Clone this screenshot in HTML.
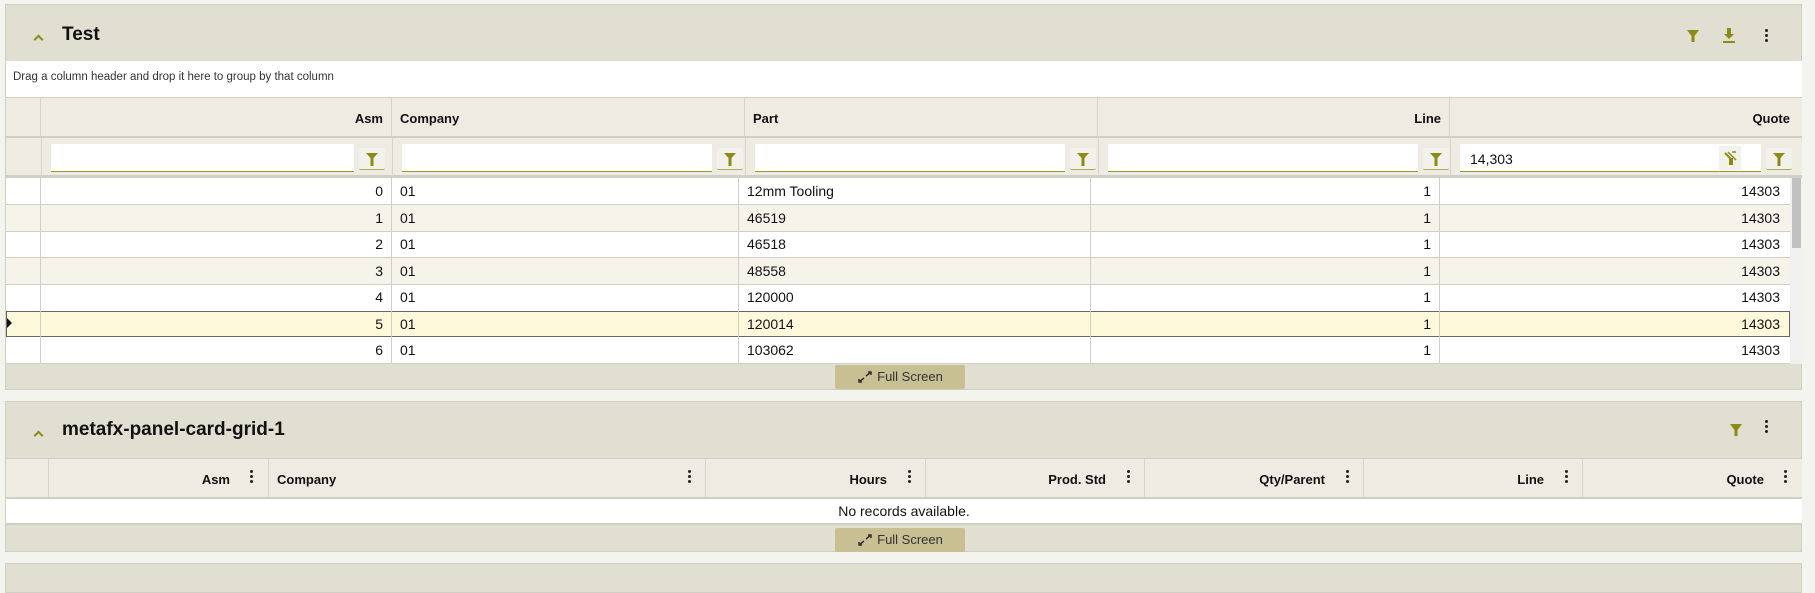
<!DOCTYPE html>
<html><head><meta charset="utf-8"><style>
*{box-sizing:border-box;margin:0;padding:0}
body{width:1815px;height:576px;background:#f4f4ef;font-family:"Liberation Sans",sans-serif;color:#111;position:relative;overflow:hidden}
.a{position:absolute}
.panel{position:absolute;left:5px;width:1797px;border:1px solid #d0cfc4;background:#e1dfd1}
.hdr{position:absolute;left:0;right:0;top:0;background:#e1dfd1}
.title{position:absolute;left:56px;font-size:19px;font-weight:bold}
.chev{position:absolute;left:29px;width:7px;height:7px;border-left:2px solid #8c8c10;border-top:2px solid #8c8c10;transform:rotate(45deg)}
.cell{position:absolute;font-size:14px;line-height:26.5px;white-space:nowrap;overflow:hidden}
.hcell{position:absolute;font-size:13px;font-weight:bold;border-right:1px solid #d6d4cc;background:#eeebe3}
.fbtn{position:absolute;width:26px;height:22px;background:#f2f1ec;border-bottom:1px solid #b0ad50;border-radius:2px}
.inp{position:absolute;height:28px;background:#fff;border-bottom:1px solid #9a9a20}
.fs{position:absolute;width:130px;height:24px;background:#c8bf93;border-radius:2px;font-size:13px;color:#333;line-height:24px;text-align:center;padding-left:20px}
.dots{position:absolute;width:3px}
.dots i{display:block;width:3px;height:3px;background:#222;border-radius:50%;margin-bottom:2px}
</style></head><body>

<!-- PANEL 1 -->
<div class="panel" style="top:4px;height:386px">
  <div class="hdr" style="height:56px"></div>
  <div class="chev" style="top:31px"></div>
  <div class="title" style="top:19px">Test</div>
  <svg class="a" style="left:1680px;top:24px" width="14" height="14" viewBox="0 0 14 14"><path d="M1 1h12L8.5 7v6h-3V7z" fill="#8c8c10"/></svg>
  <svg class="a" style="left:1716px;top:22px" width="14" height="16" viewBox="0 0 14 16"><path d="M5 1h4v6h3L7 12 2 7h3z" fill="#8c8c10"/><rect x="1" y="14" width="12" height="2" fill="#8c8c10"/></svg>
  <div class="dots" style="left:1759px;top:24px"><i></i><i></i><i></i></div>
  <div class="a" style="left:0;top:56px;width:1796px;height:36px;background:#fff;font-size:11.5px;color:#333;padding:10px 0 0 7px">Drag a column header and drop it here to group by that column</div>
  <div class="a" style="left:0;top:92px;width:1796px;height:41px;background:#eeebe3;border-top:1px solid #d0cfc4;border-bottom:2px solid #d0cfc4"></div>
  <div class="hcell" style="left:0;top:93px;width:35px;height:38px"></div>
  <div class="hcell" style="left:35px;top:93px;width:351px;height:38px;text-align:right;padding:13px 8px 0 0">Asm</div>
  <div class="hcell" style="left:386px;top:93px;width:353px;height:38px;padding:13px 0 0 8px">Company</div>
  <div class="hcell" style="left:739px;top:93px;width:353px;height:38px;padding:13px 0 0 8px">Part</div>
  <div class="hcell" style="left:1092px;top:93px;width:352px;height:38px;text-align:right;padding:13px 8px 0 0">Line</div>
  <div class="hcell" style="left:1444px;top:93px;width:352px;height:38px;text-align:right;padding:13px 12px 0 0;border-right:none">Quote</div>
  <div class="a" style="left:0;top:133px;width:1796px;height:40px;background:#eeebe3;border-bottom:3px solid #d0cfc4"></div>
  <div class="a" style="left:35px;top:133px;width:1px;height:40px;background:#d6d4cc"></div>
  <div class="a" style="left:386px;top:133px;width:1px;height:40px;background:#d6d4cc"></div>
  <div class="a" style="left:739px;top:133px;width:1px;height:40px;background:#d6d4cc"></div>
  <div class="a" style="left:1092px;top:133px;width:1px;height:40px;background:#d6d4cc"></div>
  <div class="a" style="left:1444px;top:133px;width:1px;height:40px;background:#d6d4cc"></div>
  <div class="inp" style="left:45px;top:139px;width:303px"></div>
  <div class="inp" style="left:396px;top:139px;width:310px"></div>
  <div class="inp" style="left:749px;top:139px;width:310px"></div>
  <div class="inp" style="left:1102px;top:139px;width:310px"></div>
  <div class="inp" style="left:1454px;top:139px;width:301px;font-size:14px;padding:7px 0 0 10px">14,303</div>
  <div class="fbtn" style="left:353px;top:143px"></div>
  <div class="fbtn" style="left:711px;top:143px"></div>
  <div class="fbtn" style="left:1064px;top:143px"></div>
  <div class="fbtn" style="left:1417px;top:143px"></div>
  <div class="fbtn" style="left:1760px;top:143px"></div>
  <div class="a" style="left:1713px;top:141px;width:22px;height:24px;background:#f2f1ec"></div>
  <svg class="a" style="left:360px;top:148px" width="12" height="13"><path d="M0 0h12L7.5 5v8h-3V5z" fill="#8c8c10"/></svg>
  <svg class="a" style="left:718px;top:148px" width="12" height="13"><path d="M0 0h12L7.5 5v8h-3V5z" fill="#8c8c10"/></svg>
  <svg class="a" style="left:1071px;top:148px" width="12" height="13"><path d="M0 0h12L7.5 5v8h-3V5z" fill="#8c8c10"/></svg>
  <svg class="a" style="left:1424px;top:148px" width="12" height="13"><path d="M0 0h12L7.5 5v8h-3V5z" fill="#8c8c10"/></svg>
  <svg class="a" style="left:1767px;top:148px" width="12" height="13"><path d="M0 0h12L7.5 5v8h-3V5z" fill="#8c8c10"/></svg>
  <svg class="a" style="left:1718px;top:146px" width="13" height="14"><path d="M1 2l5 5v6h2V7" stroke="#8c8c10" stroke-width="2" fill="none"/><path d="M4 1l8 8M8 1h4" stroke="#8c8c10" stroke-width="1.5"/></svg>
  <div class="a" style="left:0;top:173px;width:1796px;height:186px;background:#fff;overflow:hidden">
    <div class="a" style="left:0;top:26.5px;width:1784px;height:26px;background:#f6f3eb"></div>
    <div class="a" style="left:0;top:79.5px;width:1784px;height:26px;background:#f6f3eb"></div>
    <div class="a" style="left:0;top:132.5px;width:1784px;height:26px;background:#fff9dc;border:1px solid #666"></div>
    <div class="a" style="left:0;top:26px;width:1784px;height:1px;background:#d0cfc4"></div>
    <div class="a" style="left:0;top:52.5px;width:1784px;height:1px;background:#d0cfc4"></div>
    <div class="a" style="left:0;top:79px;width:1784px;height:1px;background:#d0cfc4"></div>
    <div class="a" style="left:0;top:105.5px;width:1784px;height:1px;background:#d0cfc4"></div>
    <div class="a" style="left:0;top:185px;width:1784px;height:1px;background:#d0cfc4"></div>
    <div class="a" style="left:34px;top:0;width:1px;height:186px;background:#d0cfc4"></div>
    <div class="a" style="left:385px;top:0;width:1px;height:186px;background:#d0cfc4"></div>
    <div class="a" style="left:732px;top:0;width:1px;height:186px;background:#d0cfc4"></div>
    <div class="a" style="left:1084px;top:0;width:1px;height:186px;background:#d0cfc4"></div>
    <div class="a" style="left:1433px;top:0;width:1px;height:186px;background:#d0cfc4"></div>
    <div class="a" style="left:1784px;top:0;width:12px;height:186px;background:#f0f0f0"></div>
    <div class="a" style="left:1786px;top:0;width:9px;height:70px;background:#c1c1c1"></div>
    <svg class="a" style="left:1px;top:140px" width="6" height="10"><path d="M0 0l5 5-5 5z" fill="#111"/></svg>
    <div class="cell" style="left:35px;top:0;width:342px;text-align:right">0<br>1<br>2<br>3<br>4<br>5<br>6</div>
    <div class="cell" style="left:394px;top:0">01<br>01<br>01<br>01<br>01<br>01<br>01</div>
    <div class="cell" style="left:741px;top:0">12mm Tooling<br>46519<br>46518<br>48558<br>120000<br>120014<br>103062</div>
    <div class="cell" style="left:1085px;top:0;width:340px;text-align:right">1<br>1<br>1<br>1<br>1<br>1<br>1</div>
    <div class="cell" style="left:1434px;top:0;width:340px;text-align:right">14303<br>14303<br>14303<br>14303<br>14303<br>14303<br>14303</div>
  </div>
  <div class="fs" style="left:829px;top:360px">Full Screen</div>
  <svg class="a" style="left:852px;top:366px" width="14" height="12"><path d="M8 5l5-4M10 1h3v3M6 7l-5 4M1 8v3h3" stroke="#333" stroke-width="1.5" fill="none"/></svg>
</div>

<!-- PANEL 2 -->
<div class="panel" style="top:401px;height:151px">
  <div class="chev" style="top:30px"></div>
  <div class="title" style="top:17px">metafx-panel-card-grid-1</div>
  <svg class="a" style="left:1723px;top:21px" width="14" height="14" viewBox="0 0 14 14"><path d="M1 1h12L8.5 7v6h-3V7z" fill="#8c8c10"/></svg>
  <div class="dots" style="left:1759px;top:18px"><i></i><i></i><i></i></div>
  <div class="a" style="left:0;top:56px;width:1796px;height:41px;background:#eeebe3;border-top:1px solid #d0cfc4;border-bottom:2px solid #d0cfc4"></div>
  <div class="hcell" style="left:0;top:57px;width:43px;height:38px"></div>
  <div class="hcell" style="left:43px;top:57px;width:220px;height:38px;text-align:right;padding:13px 38px 0 0">Asm</div>
  <div class="hcell" style="left:263px;top:57px;width:437px;height:38px;padding:13px 0 0 8px">Company</div>
  <div class="hcell" style="left:700px;top:57px;width:220px;height:38px;text-align:right;padding:13px 38px 0 0">Hours</div>
  <div class="hcell" style="left:920px;top:57px;width:219px;height:38px;text-align:right;padding:13px 38px 0 0">Prod. Std</div>
  <div class="hcell" style="left:1139px;top:57px;width:219px;height:38px;text-align:right;padding:13px 38px 0 0">Qty/Parent</div>
  <div class="hcell" style="left:1358px;top:57px;width:219px;height:38px;text-align:right;padding:13px 38px 0 0">Line</div>
  <div class="hcell" style="left:1577px;top:57px;width:219px;height:38px;text-align:right;padding:13px 38px 0 0;border-right:none">Quote</div>
  <div class="dots" style="left:244px;top:68px"><i></i><i></i><i></i></div>
  <div class="dots" style="left:682px;top:68px"><i></i><i></i><i></i></div>
  <div class="dots" style="left:902px;top:68px"><i></i><i></i><i></i></div>
  <div class="dots" style="left:1121px;top:68px"><i></i><i></i><i></i></div>
  <div class="dots" style="left:1340px;top:68px"><i></i><i></i><i></i></div>
  <div class="dots" style="left:1559px;top:68px"><i></i><i></i><i></i></div>
  <div class="dots" style="left:1778px;top:68px"><i></i><i></i><i></i></div>
  <div class="a" style="left:0;top:97px;width:1796px;height:26px;background:#fff;border-bottom:2px solid #d0cfc4;text-align:center;font-size:14px;line-height:24px">No records available.</div>
  <div class="fs" style="left:829px;top:126px">Full Screen</div>
  <svg class="a" style="left:852px;top:132px" width="14" height="12"><path d="M8 5l5-4M10 1h3v3M6 7l-5 4M1 8v3h3" stroke="#333" stroke-width="1.5" fill="none"/></svg>
</div>

<div class="panel" style="top:563px;height:30px"></div>
</body></html>
